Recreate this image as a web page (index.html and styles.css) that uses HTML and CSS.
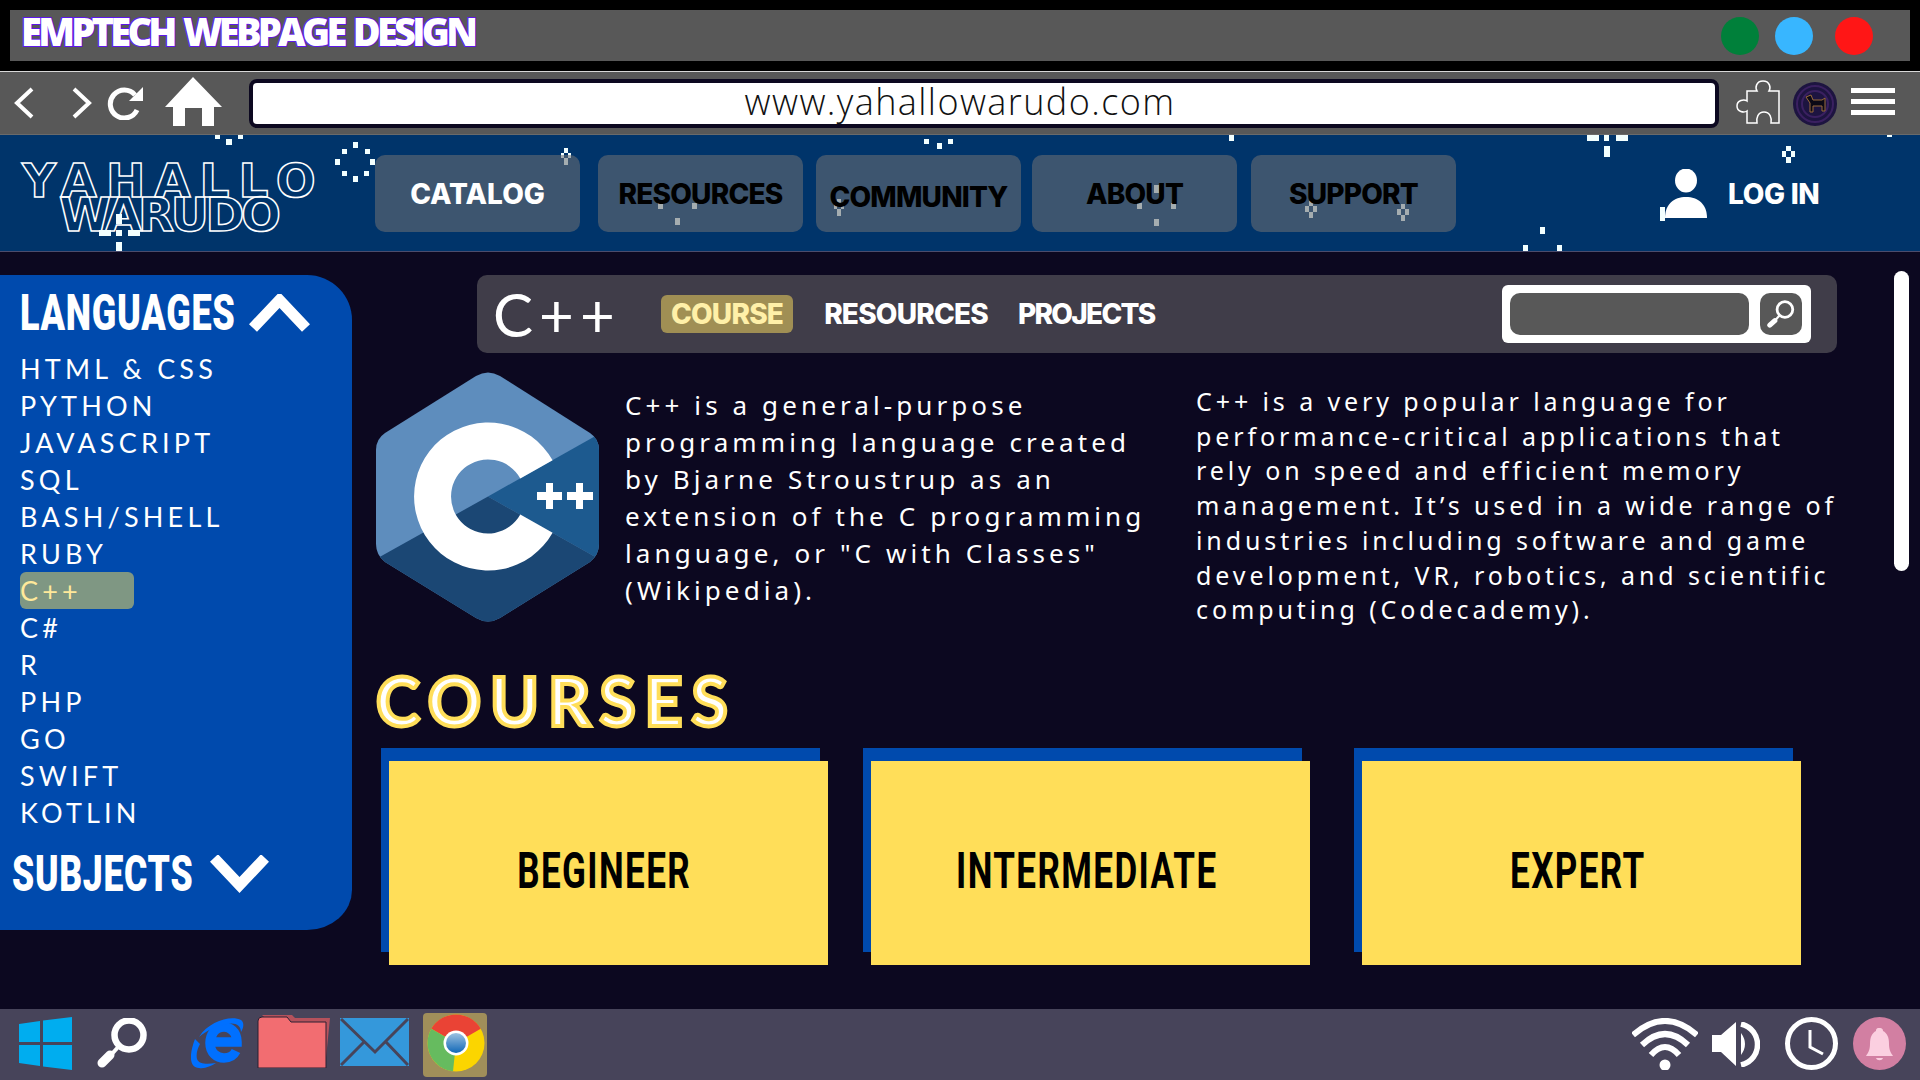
FILE: index.html
```html
<!DOCTYPE html>
<html lang="en">
<head>
<meta charset="utf-8">
<title>EMPTECH Webpage Design</title>
<link rel="stylesheet" href="styles.css">
</head>
<body>
<div class="titlebar">
  <div class="titleinner">
    <div class="apptitle">EMPTECH WEBPAGE DESIGN</div>
    <div class="lights"><span class="light green"></span><span class="light blue"></span><span class="light red"></span></div>
  </div>
</div>
<div class="addr">
  <svg class="i-back" width="21" height="32" viewBox="0 0 21 32"><path d="M19 2 L4 16 L19 30" fill="none" stroke="#fff" stroke-width="4"/></svg>
  <svg class="i-fwd" width="21" height="32" viewBox="0 0 21 32"><path d="M2 2 L17 16 L2 30" fill="none" stroke="#fff" stroke-width="4"/></svg>
  <svg class="i-reload" width="36" height="34" viewBox="0 0 36 34"><path d="M28 9 A14 14 0 1 0 30 24" fill="none" stroke="#fff" stroke-width="5"/><path d="M36 1 V15 H22 Z" fill="#fff"/></svg>
  <svg class="i-home" width="57" height="49" viewBox="0 0 57 49"><path d="M28 0 L57 30 H49 V49 H8 V30 H0 Z" fill="#fff"/><rect x="20" y="31" width="17" height="18" fill="#585858"/></svg>
  <div class="url">www.yahallowarudo.com</div>
  <svg class="i-puzzle" width="44" height="44" viewBox="0 0 44 44"><path d="M11 11 H21 C19 8 20 1 27 1 C34 1 35 8 33 11 H43 V43 H35 C36 38 34 32 28 32 C22 32 20 38 21 43 H11 V31 C8 33 1 32 1 26 C1 20 8 19 11 21 Z" fill="none" stroke="#fff" stroke-width="1.5"/></svg>
  <svg class="i-avatar" width="44" height="44" viewBox="0 0 44 44"><circle cx="22" cy="22" r="22" fill="#1d1440"/><circle cx="22" cy="22" r="18" fill="none" stroke="#3a2060" stroke-width="2"/><circle cx="22" cy="22" r="13" fill="none" stroke="#3a2060" stroke-width="2"/><path d="M13 15 L18 13 L20 18 H29 L32 16 V29 H29 V24 H20 V30 H17 V21 Z" fill="#0b0916" stroke="#9a6a3a" stroke-width="1"/></svg>
  <div class="burger"><span></span><span></span><span></span></div>
</div>
<header class="site">
  <svg class="stars" width="1920" height="116" viewBox="0 135 1920 116" fill="#f2ffff">
    <rect x="215" y="135" width="5" height="4"/><rect x="226" y="139" width="6" height="6"/><rect x="238" y="135" width="5" height="4"/>
    <rect x="353" y="142" width="5" height="6"/><rect x="342" y="149" width="5" height="5"/><rect x="365" y="149" width="5" height="5"/><rect x="335" y="159" width="5" height="6"/><rect x="370" y="159" width="5" height="6"/><rect x="342" y="171" width="5" height="5"/><rect x="364" y="171" width="5" height="5"/><rect x="353" y="176" width="5" height="6"/>
    <rect x="564" y="148" width="4" height="5"/><rect x="561" y="153" width="3" height="5"/><rect x="568" y="153" width="3" height="5"/><rect x="564" y="158" width="4" height="7"/>
    <rect x="658" y="203" width="5" height="6"/><rect x="692" y="203" width="5" height="6"/><rect x="675" y="218" width="5" height="7"/>
    <rect x="837" y="199" width="4" height="5"/><rect x="834" y="204" width="3" height="5"/><rect x="841" y="204" width="3" height="5"/><rect x="837" y="209" width="4" height="7"/>
    <rect x="924" y="139" width="5" height="5"/><rect x="937" y="143" width="5" height="6"/><rect x="948" y="139" width="5" height="5"/>
    <rect x="1154" y="185" width="5" height="8"/><rect x="1137" y="203" width="5" height="6"/><rect x="1171" y="203" width="5" height="6"/><rect x="1154" y="219" width="5" height="7"/>
    <rect x="1309" y="201" width="4" height="5"/><rect x="1305" y="206" width="4" height="6"/><rect x="1313" y="206" width="4" height="6"/><rect x="1309" y="212" width="4" height="6"/>
    <rect x="1401" y="204" width="4" height="5"/><rect x="1397" y="209" width="4" height="6"/><rect x="1405" y="209" width="4" height="6"/><rect x="1401" y="215" width="4" height="6"/>
    <rect x="1229" y="135" width="5" height="6"/>
    <rect x="1587" y="135" width="12" height="6"/><rect x="1604" y="135" width="5" height="6"/><rect x="1616" y="135" width="12" height="6"/><rect x="1604" y="146" width="6" height="11"/>
    <rect x="1786" y="146" width="5" height="5"/><rect x="1782" y="151" width="4" height="6"/><rect x="1791" y="151" width="4" height="6"/><rect x="1786" y="157" width="5" height="6"/>
    <rect x="1887" y="135" width="5" height="2"/>
    <rect x="1540" y="227" width="5" height="7"/><rect x="1523" y="245" width="5" height="6"/><rect x="1557" y="245" width="5" height="6"/>
    <rect x="1660" y="207" width="5" height="14"/>
  </svg>
  <div class="logotext"><span class="lt1">YAHALLO</span><span class="lt2">WARUDO</span></div>
  <svg class="stars" width="1920" height="116" viewBox="0 135 1920 116" fill="#f2ffff">
    <rect x="116" y="214" width="6" height="10"/><rect x="99" y="230" width="12" height="6"/><rect x="116" y="230" width="6" height="6"/><rect x="128" y="230" width="12" height="6"/><rect x="116" y="242" width="6" height="9"/>
  </svg>
  <nav class="mainnav">
    <a class="navbtn white">CATALOG</a>
    <a class="navbtn">RESOURCES</a>
    <a class="navbtn low">COMMUNITY</a>
    <a class="navbtn">ABOUT</a>
    <a class="navbtn">SUPPORT</a>
  </nav>
  <div class="login">
    <svg width="42" height="49" viewBox="0 0 42 49"><ellipse cx="21" cy="11.5" rx="11" ry="12" fill="#fff"/><path d="M0 49 C0 35 9 28 21 28 C33 28 42 35 42 49 Z" fill="#fff"/></svg>
    <span>LOG IN</span>
  </div>
</header>
<main class="page">
  <aside class="side">
    <div class="sidehead">
      <span class="cond lang">LANGUAGES</span>
      <svg width="62" height="38" viewBox="0 0 62 38"><path d="M4 34 L30.500 6 L57 34" fill="none" stroke="#fff" stroke-width="11"/></svg>
    </div>
    <ul class="langs">
      <li>HTML &amp; CSS</li><li>PYTHON</li><li>JAVASCRIPT</li><li>SQL</li><li>BASH/SHELL</li><li>RUBY</li>
      <li class="current">C++</li>
      <li>C#</li><li>R</li><li>PHP</li><li>GO</li><li>SWIFT</li><li>KOTLIN</li>
    </ul>
    <div class="sidehead second">
      <span class="cond subj">SUBJECTS</span>
      <svg width="62" height="38" viewBox="0 0 62 38"><path d="M5 3 L30.500 30 L56 3" fill="none" stroke="#fff" stroke-width="11"/></svg>
    </div>
  </aside>
  <section class="content">
    <div class="tabbar">
      <div class="tabtitle">C++</div>
      <a class="tab active">COURSE</a>
      <a class="tab">RESOURCES</a>
      <a class="tab">PROJECTS</a>
      <div class="search">
        <div class="searchfield"></div>
        <div class="searchbtn"><svg width="28" height="28" viewBox="0 0 50 50"><circle cx="32" cy="17" r="14" fill="none" stroke="#fff" stroke-width="5"/><path d="M22 28 L14 37" stroke="#fff" stroke-width="4"/><path d="M14 37 L5 45" stroke="#fff" stroke-width="9" stroke-linecap="round"/></svg></div>
      </div>
    </div>
    <div class="intro">
      <svg class="cpp" width="223" height="250" viewBox="0 0 223 250">
        <defs><clipPath id="hex"><path d="M100 4 Q112 -3 124 4 L214 61 Q223 67 223 78 V172 Q223 183 214 190 L124 246 Q112 253 100 246 L9 190 Q0 183 0 172 V78 Q0 67 9 61 Z"/></clipPath></defs>
        <g clip-path="url(#hex)">
          <rect width="223" height="250" fill="#5e8dbd"/>
          <path d="M112 124.500 L223 62 V187 Z" fill="#1d5a8f"/>
          <path d="M112 124.500 L223 187 V250 H0 V187 Z" fill="#1b4774"/>
        </g>
        <path d="M176.600 88.300 A74 74 0 1 0 176.600 160.700 L144.300 142.600 A37 37 0 1 1 144.300 106.400 Z" fill="#fff"/>
        <path d="M170 111 H177 V120 H186 V128 H177 V137 H170 V128 H161 V120 H170 Z M200 111 H207 V120 H217 V128 H207 V137 H200 V128 H191 V120 H200 Z" fill="#fff"/>
      </svg>
      <p class="blurb one">C++ is a general-purpose programming language created by Bjarne Stroustrup as an extension of the C programming language, or "C with Classes" (Wikipedia).</p>
      <p class="blurb two">C++ is a very popular language for performance-critical applications that rely on speed and efficient memory management. It’s used in a wide range of industries including software and game development, VR, robotics, and scientific computing (Codecademy).</p>
    </div>
    <h2 class="courses">COURSES</h2>
    <div class="cards">
      <a class="card"><span>BEGINEER</span></a>
      <a class="card"><span>INTERMEDIATE</span></a>
      <a class="card"><span>EXPERT</span></a>
    </div>
  </section>
  <div class="scrollbar"></div>
</main>
<footer class="taskbar">
  <svg class="t-win" width="53" height="53" viewBox="0 0 53 53" fill="#00adef"><path d="M0 7 L21 4 V25 H0 Z M24 3.500 L53 0 V25 H24 Z M0 28 H21 V49 L0 46 Z M24 28 H53 V53 L24 49.500 Z"/></svg>
  <svg class="t-search" width="50" height="50" viewBox="0 0 50 50"><circle cx="32" cy="17" r="14.500" fill="none" stroke="#fff" stroke-width="6.500"/><path d="M22 28 L14 37" stroke="#fff" stroke-width="4"/><path d="M13 37 L5 45" stroke="#fff" stroke-width="9" stroke-linecap="round"/></svg>
  <svg class="t-ie" width="53" height="52" viewBox="0 0 53 52"><path d="M22 25 H46 C46 14 38 10 33 10 C24 10 19 18 19 26 C19 36 26 41 33 41 C39 41 43 38 45 34" fill="none" stroke="#0070ff" stroke-width="9.500"/><path d="M8 20 C18 4 40 -2 50 3 C54 6 52 12 50 15 C50 8 44 5 36 7 C25 9 15 14 8 20Z M4 22 C-2 38 -2 50 8 51 C14 52 20 49 25 46 C18 47 8 48 6 42 C5 38 6 32 9 27Z" fill="#0070ff"/></svg>
  <svg class="t-folder" width="73" height="53" viewBox="0 0 73 53"><path d="M5 0 H35 L38 3 H73 L68 53 H60 Z" fill="#b5525c"/><path d="M1 6 Q1 2 5 2 H30 L34 7 H69 V53 H1 Z" fill="#f26d71" stroke="#2b2133" stroke-width="1"/></svg>
  <svg class="t-mail" width="69" height="48" viewBox="0 0 69 48"><rect width="69" height="48" fill="#3498db"/><path d="M1 1 L35 34 L68 1 M1 47 L24 24 M68 47 L46 24" fill="none" stroke="#47445a" stroke-width="3"/></svg>
  <div class="t-chrome">
    <svg width="58" height="58" viewBox="0 0 58 58"><circle cx="29" cy="29" r="28.500" fill="#fbd500"/><path d="M29 29 L4.300 14.750 A28.500 28.500 0 0 1 53.700 14.750 Z" fill="#ea4335"/><path d="M29 29 L4.300 14.750 A28.500 28.500 0 0 0 26 57.300 Z" fill="#66bb5f"/><circle cx="29" cy="29" r="12.500" fill="#fff"/><defs><linearGradient id="gl" x1="0" y1="0" x2="0" y2="1"><stop offset="0" stop-color="#9cc1e0"/><stop offset="1" stop-color="#1168b8"/></linearGradient></defs><circle cx="29" cy="29" r="10" fill="url(#gl)"/></svg>
  </div>
  <div class="trayspace"></div>
  <svg class="t-wifi" width="66" height="52" viewBox="0 0 66 52"><path d="M1 17 Q33 -11 65 17 M10 27 Q33 5 56 27 M19 37 Q33 21 47 37" fill="none" stroke="#fff" stroke-width="6"/><circle cx="33" cy="47" r="5.500" fill="#fff"/></svg>
  <svg class="t-speaker" width="48" height="45" viewBox="0 0 48 45"><path d="M0 13 H9 L24 0 V44 L9 30 H0 Z M29 11 Q37 22 29 33 Z" fill="#fff"/><path d="M29 2 C51 7 51 38 29 43" fill="none" stroke="#fff" stroke-width="5.500"/></svg>
  <svg class="t-clock" width="53" height="53" viewBox="0 0 53 53"><circle cx="26.500" cy="26.500" r="24" fill="none" stroke="#fff" stroke-width="5"/><path d="M25 13 V30 L38 37" fill="none" stroke="#fff" stroke-width="3"/></svg>
  <svg class="t-bell" width="53" height="53" viewBox="0 0 53 53"><circle cx="26.500" cy="26.500" r="26.500" fill="#d27fa2"/><path d="M26 11 C23 11 23 13 23 14 C19 16 17 20 17 27 C17 33 15 36 13 39 H40 C38 36 36 33 36 27 C36 20 34 16 30 14 C30 13 30 11 26 11 Z M23 41 H30 C29 44 24 44 23 41 Z" fill="#fbcfe0"/></svg>
</footer>
</body>
</html>
```
FILE: styles.css
```css
* { box-sizing: border-box; }
html, body { margin: 0; padding: 0; }
body { width: 1920px; height: 1080px; overflow: hidden; display: flex; flex-direction: column; background: #0c0820; font-family: "Lato", sans-serif; color: #fff; }
svg { display: block; flex: none; }
a { display: block; }

.titlebar { height: 72px; background: #000; border-bottom: 1px solid #d8d8d8; padding: 10px; }
.titleinner { height: 51px; background: #585858; display: flex; align-items: center; justify-content: space-between; padding: 0 37px 0 11px; }
.apptitle { font: 800 38px/1 "Open Sans", sans-serif; letter-spacing: -3.700px; word-spacing: 3px; color: #fff; -webkit-text-stroke: 2px #5e17eb; paint-order: stroke fill; position: relative; top: -5px; }
.lights { display: flex; align-items: center; }
.light { width: 38px; height: 38px; border-radius: 50%; display: block; }
.green { background: #00803a; margin-right: 16px; }
.blue { background: #38b6ff; margin-right: 22px; }
.red { background: #ff1616; }

.addr { height: 63px; background: #585858; border-bottom: 1px solid #6a6a6a; display: flex; align-items: flex-start; padding-left: 13px; }
.i-back { margin-top: 15px; }
.i-fwd { margin: 15px 0 0 38px; }
.i-reload { margin: 14px 0 0 14px; }
.i-home { margin: 5px 0 0 22px; }
.url { width: 1470px; height: 49px; margin: 7px 0 0 27px; background: #fff; border: 4px solid #0c0820; border-radius: 8px; color: #111; font: 300 36px/38px "Open Sans", sans-serif; letter-spacing: 1.400px; text-align: center; padding-right: 48px; }
.i-puzzle { margin: 8px 0 0 17px; }
.i-avatar { margin: 10px 0 0 13px; }
.burger { margin: 16px 0 0 14px; width: 44px; display: flex; flex-direction: column; gap: 6px; }
.burger span { display: block; height: 5px; background: #fff; }

.site { height: 117px; background: #00346a; border-bottom: 1px solid #4c4c6c; position: relative; display: flex; align-items: flex-start; }
.stars { position: absolute; left: 0; top: 0; }
.logotext { position: relative; width: 375px; height: 116px; flex: none; padding-top: 29px; }
.lt1, .lt2 { display: block; font: 700 47px/34px "DejaVu Sans", sans-serif; color: transparent; -webkit-text-stroke: 1.5px #fff; white-space: nowrap; }
.lt1 { margin-left: 22px; letter-spacing: 9px; }
.lt2 { margin-left: 59px; letter-spacing: -3.500px; }
.mainnav { position: relative; display: flex; margin-top: 20px; }
.navbtn { width: 205px; height: 77px; border-radius: 10px; background: rgba(107,110,116,.57); color: #000; font: 800 28px/79px "Inter", sans-serif; letter-spacing: -.8px; text-align: center; }
.navbtn:nth-child(2) { margin-left: 18px; }
.navbtn:nth-child(3) { margin-left: 13px; }
.navbtn:nth-child(4) { margin-left: 11px; }
.navbtn:nth-child(5) { margin-left: 14px; }
.navbtn.white { color: #fff; letter-spacing: 0; }
.navbtn.low { line-height: 85px; }
.login { position: relative; display: flex; align-items: center; margin: 34px 0 0 209px; gap: 21px; font: 800 28px/1 "Inter", sans-serif; letter-spacing: -.3px; }

.page { height: 757px; display: flex; align-items: flex-start; position: relative; }
.side { width: 352px; height: 655px; flex: none; margin-top: 23px; background: #004aad; border-radius: 0 45px 45px 0 / 0 45px 40px 0; padding-top: 9px; }
.sidehead { height: 58px; display: flex; align-items: center; padding-left: 20px; }
.cond { display: block; font: 900 50px/58px "Roboto", sans-serif; letter-spacing: 1px; white-space: nowrap; transform-origin: left center; }
.lang { width: 229px; transform: scaleX(.72); }
.subj { width: 197px; transform: scaleX(.71); }
.langs { list-style: none; margin: 8px 0 0; padding: 0 0 0 20px; font: 400 27px/37px "Lato", sans-serif; letter-spacing: 4.200px; }
.langs li { height: 37px; }
.langs .current { width: 114px; background: #7f9783; border-radius: 6px; color: #ffe99a; }
.sidehead.second { margin-top: 14px; padding-left: 12px; }

.content { flex: 1; padding: 23px 0 0 24px; min-width: 0; }
.tabbar { margin-left: 101px; width: 1360px; height: 78px; background: #403d49; border-radius: 10px; display: flex; align-items: center; padding-left: 16px; }
.tabtitle { width: 168px; flex: none; font: 400 60px/1 "Lato", sans-serif; letter-spacing: 6px; }
.tab { font: 800 28px/38px "Inter", sans-serif; letter-spacing: -.8px; margin-right: 30px; }
.tab.active { background: #a08f54; color: #fff0a8; border-radius: 6px; padding: 0 10px; margin-right: 31px; }
.tab:nth-child(4) { letter-spacing: -1.700px; }
.search { margin-left: auto; margin-right: 26px; width: 309px; height: 58px; background: #fff; border-radius: 6px; display: flex; align-items: center; padding: 0 9px 0 8px; }
.searchfield { width: 239px; height: 42px; background: #585858; border-radius: 10px; }
.searchbtn { width: 42px; height: 42px; margin-left: 11px; background: #585858; border-radius: 10px; display: flex; align-items: center; justify-content: center; }

.intro { display: flex; align-items: flex-start; margin-top: 19px; }
.blurb { margin: 0; font: 400 26px/37px "Noto Sans", sans-serif; letter-spacing: 4.100px; }
.one { width: 540px; flex: none; margin: 15px 0 0 26px; }
.two { width: 650px; flex: none; margin: 12px 0 0 31px; font-size: 25px; line-height: 34.700px; letter-spacing: 3.900px; }

.courses { margin: 41px 0 0; font: 700 66px/1 "Lato", sans-serif; letter-spacing: 9px; color: #fff; -webkit-text-stroke: 4px #ffde59; }
.cards { display: flex; margin: 27px 0 0 13px; }
.card { width: 439px; height: 204px; background: #ffde59; box-shadow: -8px -13px 0 #004aad; color: #000; font: 700 50px/1 "Roboto", sans-serif; letter-spacing: 2px; display: flex; align-items: center; justify-content: center; padding: 17px 8px 0 0; }
.card span { display: block; transform: scaleX(.7); white-space: nowrap; }
.card:nth-child(2) { margin-left: 43px; }
.card:nth-child(3) { margin-left: 52px; }

.scrollbar { width: 15px; height: 300px; margin: 19px 11px 0 0; flex: none; background: #fff; border-radius: 8px; }

.taskbar { height: 71px; background: #47445a; display: flex; align-items: flex-start; padding-left: 19px; }
.t-win { margin-top: 8px; }
.t-search { margin: 9px 0 0 25px; }
.t-ie { margin: 8px 0 0 44px; }
.t-folder { margin: 6px 0 0 13px; }
.t-mail { margin: 9px 0 0 10px; }
.t-chrome { width: 64px; height: 64px; margin: 4px 0 0 14px; background: #a08f5a; border-radius: 4px; padding: 1px 0 0 4px; }
.trayspace { flex: 1; }
.t-wifi { margin-top: 9px; }
.t-speaker { margin: 13px 0 0 14px; }
.t-clock { margin: 8px 0 0 25px; }
.t-bell { margin: 8px 14px 0 15px; }
```
